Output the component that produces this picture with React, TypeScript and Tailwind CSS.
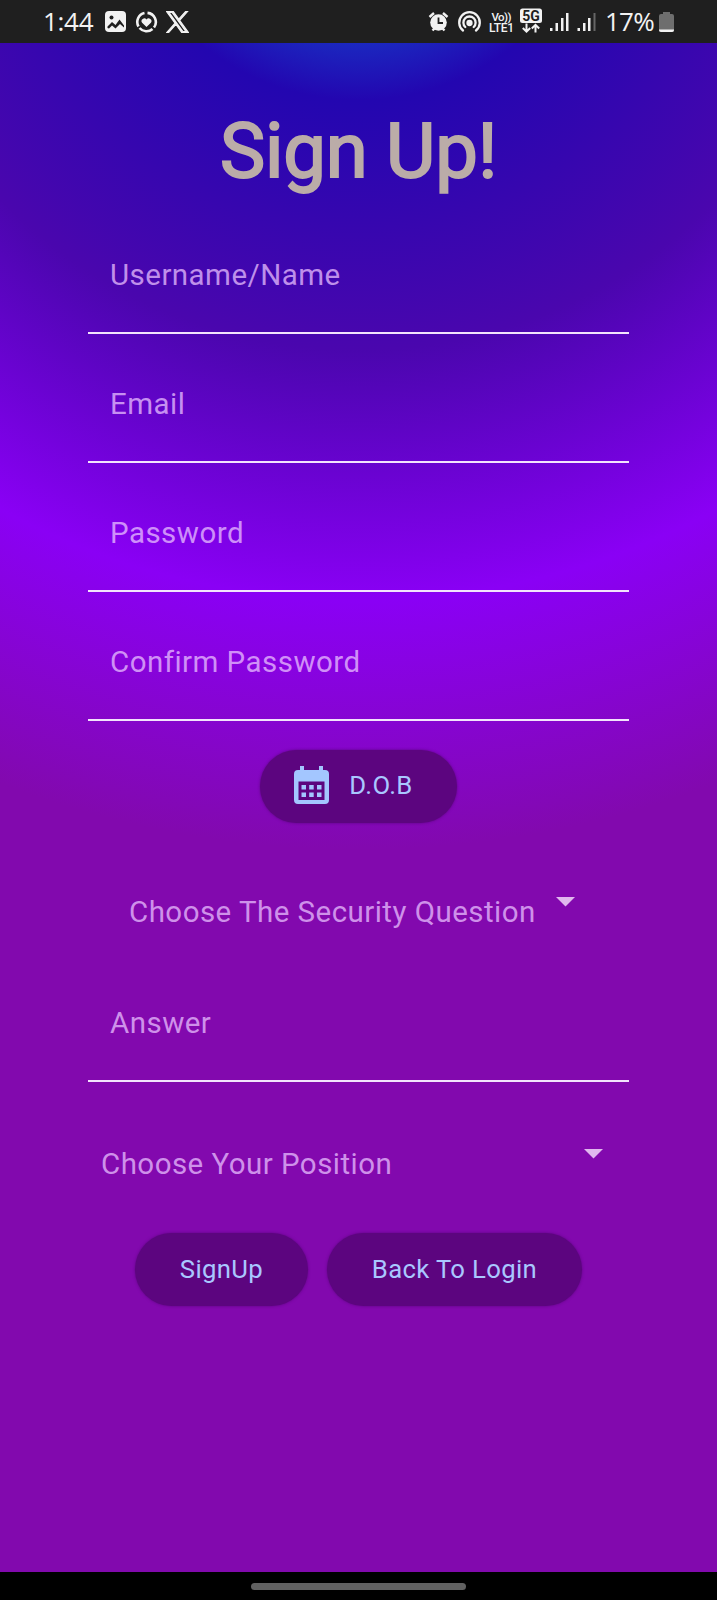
import React from "react";

function StatusLeft() {
  return (
    <div className="flex items-center pl-[43px]">
      <span className="mb-[2px] w-[62px] whitespace-nowrap font-['Open_Sans','Noto_Sans',sans-serif] text-[26px] leading-[40px] tracking-[-0.3px]">1:44</span>
      <svg className="h-[21px] w-[21px]" viewBox="0 0 21 21">
        <rect width="21" height="21" rx="4" fill="#f2f2f2" />
        <circle cx="6.5" cy="6.5" r="2" fill="#1f1f1f" />
        <path d="M2.500 15.500 7 11l3.500 3L14.500 8.500l4.500 6v2l-4-3.500-4.500 4.500-3.500-3-3 3-1.500-.5Z" fill="#1f1f1f" />
      </svg>
      <svg className="ml-[9px] h-[22px] w-[23px]" viewBox="0 0 23 22" fill="none" stroke="#f2f2f2" strokeWidth="2.6">
        <path d="M9.500 2A9.200 9.200 0 0 0 3.500 15.500M4.500 17A9.200 9.200 0 0 0 17.500 18M19 16.500A9.200 9.200 0 0 0 12.500 1.900" />
        <path d="M11.500 16 7.100 11.700a2.500 2.500 0 0 1 4.400-3.200 2.500 2.500 0 0 1 4.400 3.200Z" fill="#f2f2f2" stroke="none" />
      </svg>
      <svg className="ml-[8px] h-[22px] w-[23px]" viewBox="0 0 24 24" preserveAspectRatio="none" fill="#f2f2f2">
        <path d="M14.234 10.162 22.977 0h-2.072l-7.591 8.824L7.251 0H.258l9.168 13.343L.258 24H2.330l8.016-9.318L16.749 24h6.993zm-2.837 3.299-.929-1.329L3.076 1.560h3.182l5.965 8.532.929 1.329 7.754 11.090h-3.182z" stroke="#f2f2f2" strokeWidth="1.200" />
      </svg>
    </div>
  );
}

function StatusRight() {
  return (
    <div className="flex items-center pr-[43px]">
      <svg className="h-[44px] w-[174px]" viewBox="0 0 174 44" fill="#f2f2f2">
        <g>
          <circle cx="11.500" cy="22.500" r="8.300" />
          <path d="M2.500 17 7 13M20.500 17 16 13M5.500 30.500l2-2M17.500 30.500l-2-2" stroke="#f2f2f2" strokeWidth="2.400" />
          <path d="M11.500 17.500v5.500h4.500" fill="none" stroke="#1f1f1f" strokeWidth="1.800" />
        </g>
        <g fill="none" stroke="#f2f2f2" strokeWidth="2.300" strokeLinecap="round">
          <path d="M36 30.500a10.300 10.300 0 1 1 13 0" />
          <path d="M38.300 27a6.100 6.100 0 1 1 8.400 0" />
          <circle cx="42.500" cy="23" r="2" fill="#f2f2f2" />
        </g>
        <g fontFamily="Roboto, sans-serif" fontWeight="500">
          <text x="64.500" y="20.500" fontSize="11.500" textLength="20">Vo))</text>
          <text x="62" y="32" fontSize="12" textLength="25">LTE1</text>
        </g>
        <rect x="93" y="8.500" width="22" height="14.500" rx="2.500" />
        <text x="104" y="20.800" fontFamily="Roboto, sans-serif" fontWeight="700" fontSize="14" textAnchor="middle" fill="#1f1f1f">5G</text>
        <path d="M99.500 23.500v7.500M95.800 28l3.700 3.700 3.700-3.700M108.500 32.500v-7.500M104.800 28.500l3.700-3.700 3.700 3.700" fill="none" stroke="#f2f2f2" strokeWidth="2" />
        <path d="M123 28h2.500v3H123zM128.500 23h2.500v8h-2.500zM134 18h2.500v13H134zM139 13h2.500v18H139zM150.500 28h2.500v3h-2.500zM156 23h2.500v8H156zM161 18h2.500v13H161z" />
        <path d="M166.500 13h2v18h-2z" fill="#666" />
      </svg>
      <span className="mb-[2px] ml-[4px] w-[51px] whitespace-nowrap font-['Open_Sans','Noto_Sans',sans-serif] text-[26px] leading-[40px] tracking-[-0.8px]">17%</span>
      <svg className="ml-[3px] h-[22px] w-[15px]" viewBox="0 0 15 22">
        <path d="M4 1h7v2h2q2 0 2 2v14q0 2-2 2H2q-2 0-2-2V5q0-2 2-2h2Z" fill="#6e6e6e" />
        <path d="M0 18.500h15V19q0 2-2 2H2q-2 0-2-2Z" fill="#f2f2f2" />
      </svg>
    </div>
  );
}

const labelText =
  "block whitespace-nowrap text-[29.500px] leading-[34px] tracking-[0.460px] text-[#e8bfff]/75";

function Field({ label }: { label: string }) {
  return (
    <div className="h-[129px] border-b-2 border-[#f3e3fd] pl-[22px] pt-[53px]">
      <span className={labelText}>{label}</span>
    </div>
  );
}

function Caret() {
  return (
    <svg className="mt-[2px] h-[10px] w-[19px]" viewBox="0 0 19 10">
      <path d="M0 0h19L9.500 9.500Z" fill="#e0b8ee" />
    </svg>
  );
}

const pill =
  "flex h-[73px] items-center justify-center rounded-full bg-[#5c057f] text-[25.700px] tracking-[0.350px] text-[#a9c7ff] shadow-[0_0_3px_#5c057f]";

export default function App() {
  return (
    <div className="flex h-[1600px] w-[717px] flex-col overflow-hidden bg-black font-[Roboto,sans-serif]">
      <header className="flex h-[43px] shrink-0 items-center justify-between bg-[#1f1f1f] text-[#f2f2f2]">
        <StatusLeft />
        <StatusRight />
      </header>
      <main className="flex h-[1529px] shrink-0 flex-col bg-[radial-gradient(circle_1000px_at_358.500px_-193px,#0098f2_0%,#2306b0_25%,#4a06ae_50%,#8a00f5_75%,#8209ae_100%)]">
        <h1 className="mt-[62px] text-center text-[76px] font-normal leading-[93px] tracking-[-0.200px] text-[#bbaca8] [-webkit-text-stroke:2px_#bbaca8]">Sign Up!</h1>
        <form className="flex flex-col">
          <div className="mx-[88px] mt-[7px] flex flex-col">
            <Field label="Username/Name" />
            <Field label="Email" />
            <Field label="Password" />
            <Field label="Confirm Password" />
          </div>
          <button type="button" className={`${pill} ml-[260px] mt-[29px] w-[197px] gap-[20px] pr-[10px]`}>
            <svg className="mb-[3px] h-[38px] w-[35px]" viewBox="0 0 35 38" fill="#a3c6ff">
              <path fillRule="evenodd" d="M6 0h4v4h15V0h4v4h2q4 0 4 4v26q0 4-4 4H4q-4 0-4-4V8q0-4 4-4h2ZM4.500 15.500V34h26V15.500Z" />
              <path d="M7.500 19h4.500v4.500H7.500zM15.200 19h4.500v4.500h-4.500zM23 19h4.500v4.500H23zM7.500 26.500h4.500v4.500H7.500zM15.200 26.500h4.500v4.500h-4.500zM23 26.500h4.500v4.500H23z" />
            </svg>
            <span className="mb-[2px]">D.O.B</span>
          </button>
          <div className="ml-[129px] mt-[72px] flex h-[34px]">
            <div className="w-[427px]"><span className={labelText}>Choose The Security Question</span></div>
            <Caret />
          </div>
          <div className="mx-[88px] mt-[24px]">
            <Field label="Answer" />
          </div>
          <div className="ml-[101px] mt-[65px] flex h-[34px]">
            <div className="w-[483px]"><span className={labelText}>Choose Your Position</span></div>
            <Caret />
          </div>
          <div className="ml-[135px] mt-[52px] flex gap-[19px]">
            <button type="button" className={`${pill} w-[173px]`}>SignUp</button>
            <button type="button" className={`${pill} w-[255px]`}>Back To Login</button>
          </div>
        </form>
      </main>
      <footer className="flex h-[28px] shrink-0 justify-center pt-[11px]">
        <div className="h-[7px] w-[215px] rounded-full bg-[#616161]" />
      </footer>
    </div>
  );
}
